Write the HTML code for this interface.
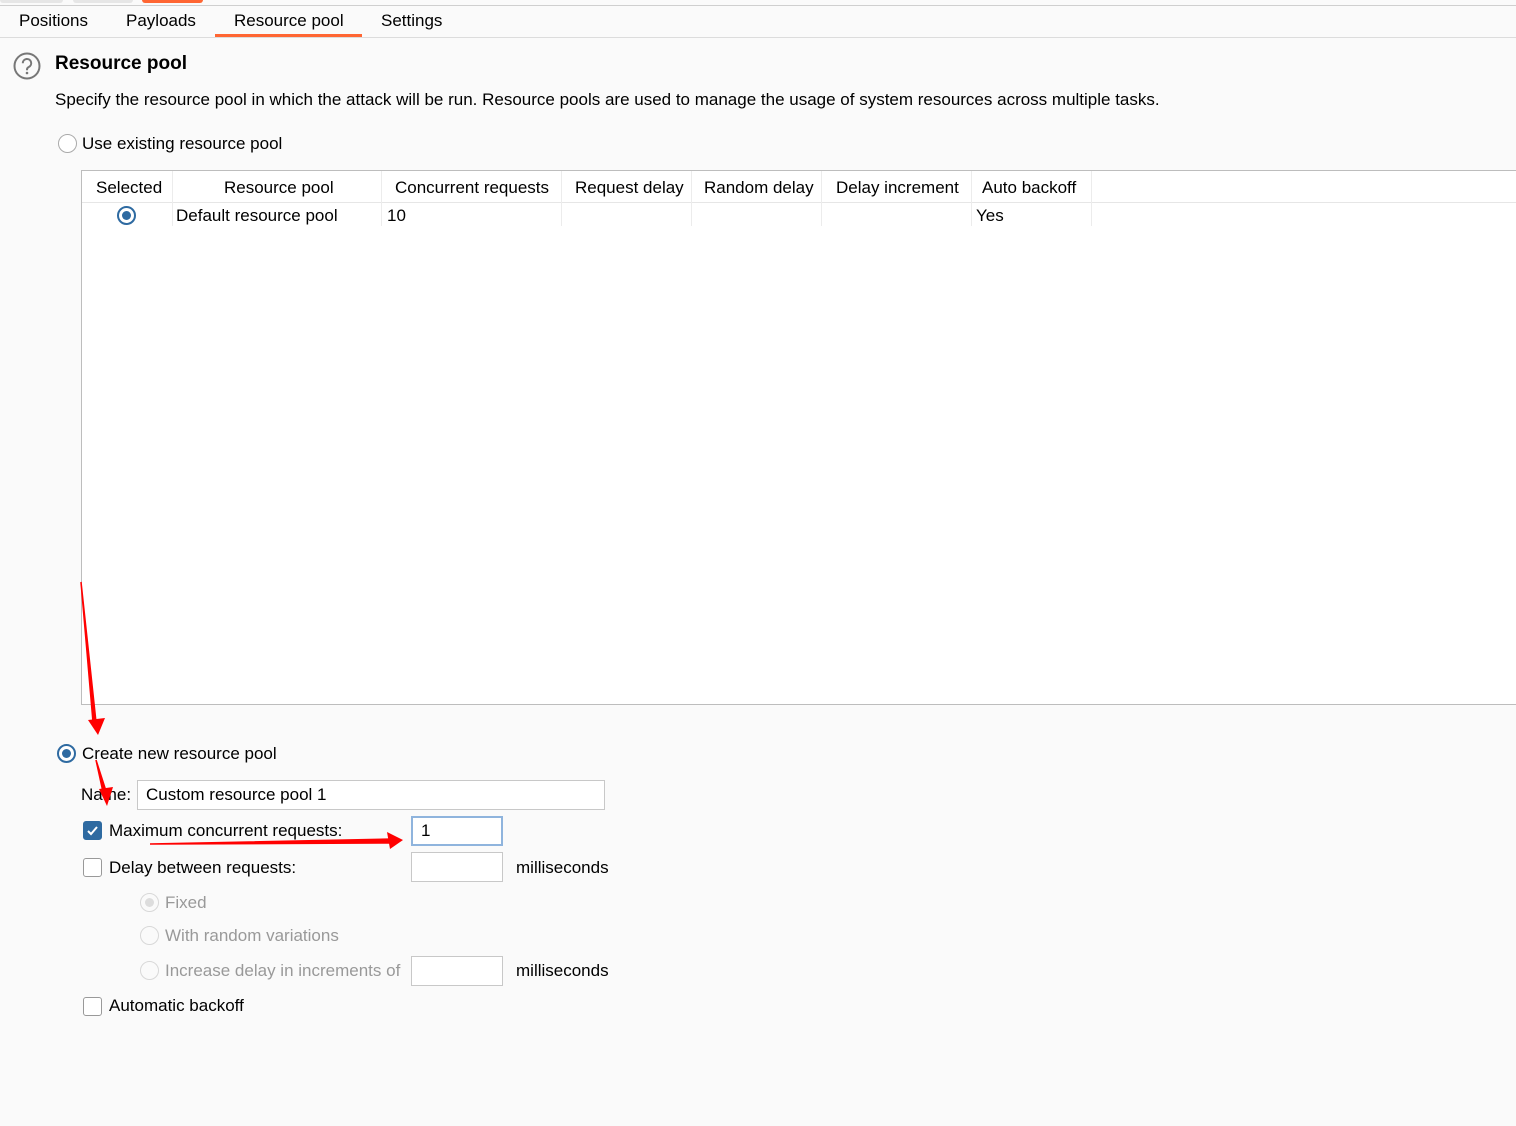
<!DOCTYPE html>
<html><head><meta charset="utf-8">
<style>
*{margin:0;padding:0;box-sizing:border-box}
body{width:1516px;height:1126px;background:#fafafa;font-family:"Liberation Sans",sans-serif;font-size:17px;color:#000;position:relative;overflow:hidden}
.a{position:absolute;white-space:nowrap;line-height:22px;margin-top:-1px}
.radio{position:absolute;width:19px;height:19px;border-radius:50%;border:1px solid #aaa;background:#fff}
.radio.on{border:2px solid #2e6aa1}
.radio.on::after{content:"";position:absolute;left:3px;top:3px;width:9px;height:9px;border-radius:50%;background:#2e6aa1}
.radio.dis{border-color:#d8d8d8;background:#fafafa}
.cb{position:absolute;width:19px;height:19px;border-radius:3px;border:1px solid #999;background:#fff}
.inp{position:absolute;background:#fff;border:1px solid #c8c8c8}
.gray{color:#999}
.col{position:absolute;top:171px;width:1px;height:55px;background:#ececec}
</style></head><body>
<div style="position:absolute;left:0;top:0;width:63px;height:3px;background:#e6e6e6;border-radius:0 0 4px 4px"></div>
<div style="position:absolute;left:73px;top:0;width:60px;height:3px;background:#e6e6e6;border-radius:0 0 4px 4px"></div>
<div style="position:absolute;left:142px;top:0;width:61px;height:3px;background:#ff6633;border-radius:0 0 3px 3px"></div>
<div style="position:absolute;left:0;top:5px;width:1516px;height:1px;background:#cfcfcf"></div>
<div style="position:absolute;left:0;top:37px;width:1516px;height:1px;background:#dcdcdc"></div>
<div class="a" style="left:19px;top:11px">Positions</div>
<div class="a" style="left:126px;top:11px">Payloads</div>
<div class="a" style="left:234px;top:11px">Resource pool</div>
<div style="position:absolute;left:215px;top:34px;width:147px;height:3px;background:#ff6633"></div>
<div class="a" style="left:381px;top:11px">Settings</div>

<svg style="position:absolute;left:12px;top:51px" width="30" height="30" viewBox="0 0 30 30"><circle cx="15" cy="15" r="12.5" fill="none" stroke="#777" stroke-width="2"/><path d="M10.8 12.2a4.2 4.2 0 1 1 6 3.8c-1.3.6-1.8 1.3-1.8 2.6v.6" fill="none" stroke="#777" stroke-width="2"/><circle cx="15" cy="22" r="1.3" fill="#777"/></svg>
<div class="a" style="left:55px;top:54px;font-size:19px;font-weight:bold">Resource pool</div>
<div class="a" style="left:55px;top:90px">Specify the resource pool in which the attack will be run. Resource pools are used to manage the usage of system resources across multiple tasks.</div>

<div class="radio" style="left:58px;top:134px"></div>
<div class="a" style="left:82px;top:134px">Use existing resource pool</div>

<div style="position:absolute;left:81px;top:170px;width:1440px;height:535px;background:#fff;border:1px solid #bdbdbd"></div>
<div style="position:absolute;left:82px;top:202px;width:1434px;height:1px;background:#e6e6e6"></div>
<div class="col" style="left:172px"></div><div class="col" style="left:381px"></div><div class="col" style="left:561px"></div><div class="col" style="left:691px"></div><div class="col" style="left:821px"></div><div class="col" style="left:971px"></div><div class="col" style="left:1091px"></div>
<div class="a" style="left:96px;top:178px">Selected</div>
<div class="a" style="left:224px;top:178px">Resource pool</div>
<div class="a" style="left:395px;top:178px">Concurrent requests</div>
<div class="a" style="left:575px;top:178px">Request delay</div>
<div class="a" style="left:704px;top:178px">Random delay</div>
<div class="a" style="left:836px;top:178px">Delay increment</div>
<div class="a" style="left:982px;top:178px">Auto backoff</div>
<div class="radio on" style="left:117px;top:206px"></div>
<div class="a" style="left:176px;top:206px">Default resource pool</div>
<div class="a" style="left:387px;top:206px">10</div>
<div class="a" style="left:976px;top:206px">Yes</div>

<div class="radio on" style="left:57px;top:744px"></div>
<div class="a" style="left:82px;top:744px">Create new resource pool</div>
<div class="a" style="left:81px;top:785px">Name:</div>
<div class="inp" style="left:137px;top:780px;width:468px;height:30px"></div>
<div class="a" style="left:146px;top:785px">Custom resource pool 1</div>

<div class="cb" style="left:83px;top:821px;background:#2e6aa1;border-color:#2e6aa1"><svg width="17" height="17" viewBox="0 0 17 17" style="position:absolute;left:0;top:0"><path d="M4 9l3 3 6-7" fill="none" stroke="#fff" stroke-width="2"/></svg></div>
<div class="a" style="left:109px;top:821px">Maximum concurrent requests:</div>
<div class="inp" style="left:411px;top:816px;width:92px;height:30px;border:2px solid #8fb4dd"></div>
<div class="a" style="left:421px;top:821px">1</div>

<div class="cb" style="left:83px;top:858px"></div>
<div class="a" style="left:109px;top:858px">Delay between requests:</div>
<div class="inp" style="left:411px;top:852px;width:92px;height:30px"></div>
<div class="a" style="left:516px;top:858px">milliseconds</div>

<div class="radio dis" style="left:140px;top:893px"><div style="position:absolute;left:4px;top:4px;width:9px;height:9px;border-radius:50%;background:#ddd"></div></div>
<div class="a gray" style="left:165px;top:893px">Fixed</div>
<div class="radio dis" style="left:140px;top:926px"></div>
<div class="a gray" style="left:165px;top:926px">With random variations</div>
<div class="radio dis" style="left:140px;top:961px"></div>
<div class="a gray" style="left:165px;top:961px">Increase delay in increments of</div>
<div class="inp" style="left:411px;top:956px;width:92px;height:30px"></div>
<div class="a" style="left:516px;top:961px">milliseconds</div>

<div class="cb" style="left:83px;top:997px"></div>
<div class="a" style="left:109px;top:996px">Automatic backoff</div>

<svg style="position:absolute;left:0;top:0" width="1516" height="1126">
<path d="M81 582 L93 722 L96 722 Z" fill="#f00" stroke="#f00" stroke-width="1.5"/>
<path d="M88 720 L98 735 L105 718 Z" fill="#f00"/>
<path d="M96 760 L103 792 L106 791 Z" fill="#f00" stroke="#f00" stroke-width="1.5"/>
<path d="M99 789 L107 806 L113 787 Z" fill="#f00"/>
<path d="M150 844 L392 839 L392 843 Z" fill="#f00" stroke="#f00" stroke-width="1.5"/>
<path d="M387 832 L403 840 L390 849 Z" fill="#f00"/>
</svg>
</body></html>
